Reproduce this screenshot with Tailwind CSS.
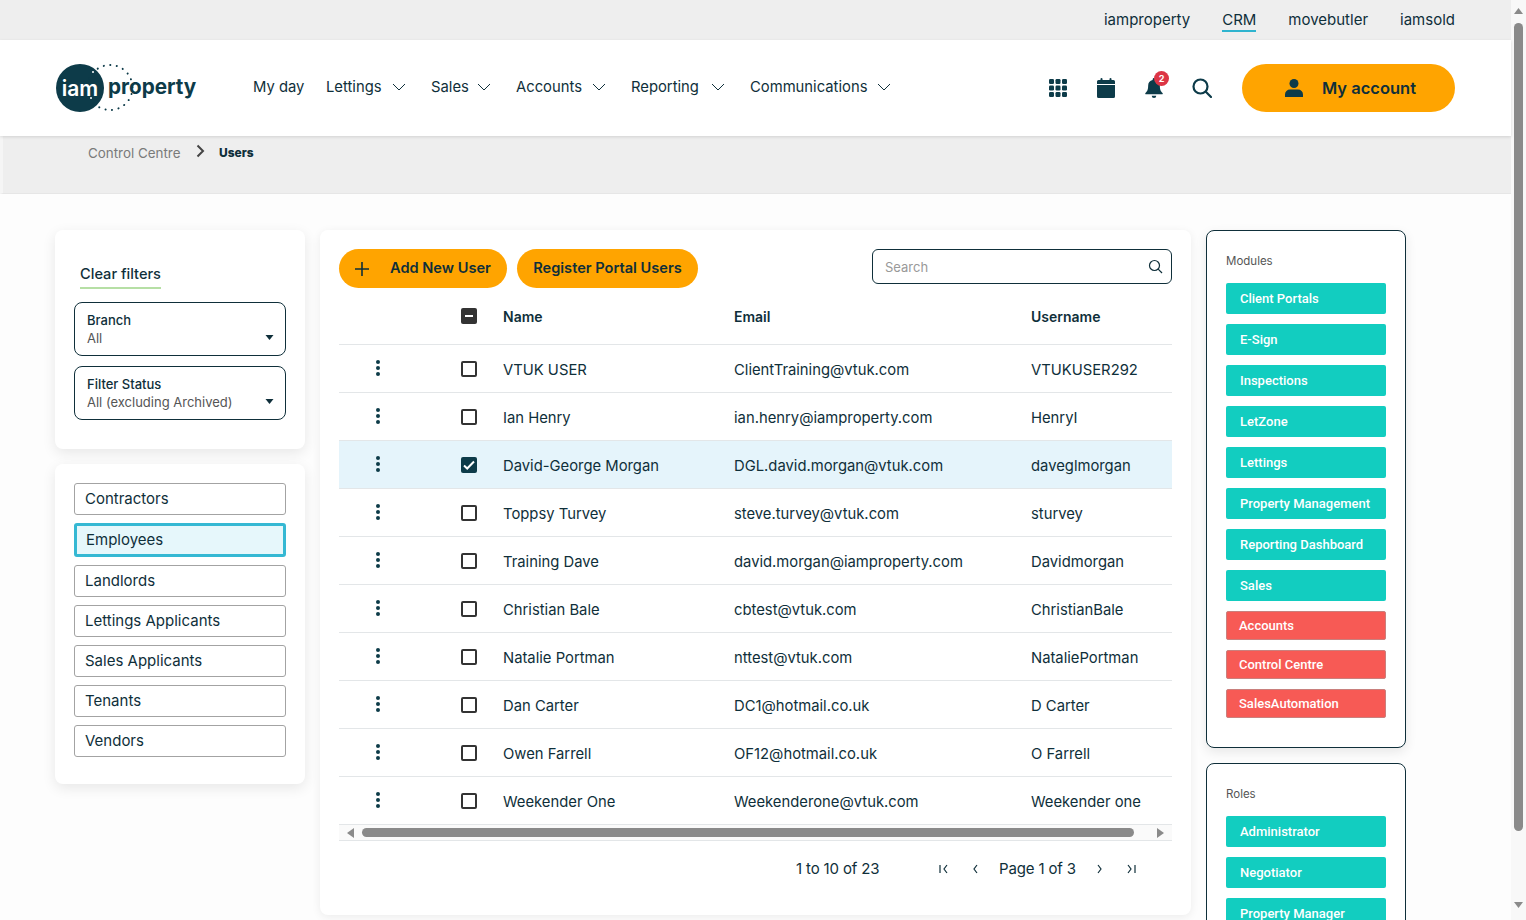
<!DOCTYPE html>
<html>
  <head>
    <meta charset="UTF-8" />
    <meta name="viewport" content="width=device-width, initial-scale=1.0" />
    <title>Users</title>
    <script src="https://cdn.jsdelivr.net/npm/@tailwindcss/browser@4"></script>
  </head>
  <body class="bg-[#fdfdfd] font-[Inter,sans-serif] text-[#0f2f3a]">
    <div class="flex h-[920px] overflow-hidden">
      <div class="w-[1511px] shrink-0">
        <!-- top strip -->
        <div class="h-10 bg-[#eeeeee] flex justify-end items-start gap-8 pr-14 text-[15px]">
          <a class="pt-[10px] leading-5">iamproperty</a>
          <a class="pt-[10px] leading-5 h-8 border-b-2 border-[#2fb4cf]">CRM</a>
          <a class="pt-[10px] leading-5">movebutler</a>
          <a class="pt-[10px] leading-5">iamsold</a>
        </div>
        <!-- header -->
        <header class="h-24 bg-white shadow-[0_1px_3px_rgba(0,0,0,0.12)] flex items-center pl-14 pr-14 relative">
          <div class="w-[197px] shrink-0 flex items-center relative h-12">
            <svg width="84" height="52" viewBox="0 0 84 52" class="absolute left-0 top-[-2px]">
              <circle cx="24" cy="26" r="24" fill="#0d3b49" />
              <circle cx="54" cy="25.500" r="22.500" fill="none" stroke="#0d3b49" stroke-width="2" stroke-linecap="round" stroke-dasharray="0.1 6.500" />
              <circle cx="37" cy="10" r="1" fill="#fff" />
              <circle cx="35" cy="36" r="1" fill="#fff" />
            </svg>
            <span class="relative w-12 text-center text-white text-[21px] font-semibold leading-none">iam</span>
            <span class="relative ml-1 mb-[2px] text-[20.700px] font-bold leading-none text-[#0d3b49]">property</span>
          </div>
          <nav class="flex items-center text-[14.800px] mb-[2px]">
            <a class="mr-[23px] w-[50px] whitespace-nowrap">My day</a>
            <a class="mr-[25px] flex items-center gap-[9px]"><span class="w-[57px]">Lettings</span>
              <svg width="14" height="8" viewBox="0 0 14 8" fill="none" stroke="#0f2f3a" stroke-width="1"><path d="M1 1l6 6 6-6" /></svg>
            </a>
            <a class="mr-[25px] flex items-center gap-[9px]"><span class="w-[37px]">Sales</span>
              <svg width="14" height="8" viewBox="0 0 14 8" fill="none" stroke="#0f2f3a" stroke-width="1"><path d="M1 1l6 6 6-6" /></svg>
            </a>
            <a class="mr-[25px] flex items-center gap-[9px]"><span class="w-[67px]">Accounts</span>
              <svg width="14" height="8" viewBox="0 0 14 8" fill="none" stroke="#0f2f3a" stroke-width="1"><path d="M1 1l6 6 6-6" /></svg>
            </a>
            <a class="mr-[25px] flex items-center gap-[9px]"><span class="w-[71px]">Reporting</span>
              <svg width="14" height="8" viewBox="0 0 14 8" fill="none" stroke="#0f2f3a" stroke-width="1"><path d="M1 1l6 6 6-6" /></svg>
            </a>
            <a class="flex items-center gap-[9px]"><span class="w-[118px]">Communications</span>
              <svg width="14" height="8" viewBox="0 0 14 8" fill="none" stroke="#0f2f3a" stroke-width="1"><path d="M1 1l6 6 6-6" /></svg>
            </a>
          </nav>
          <div class="ml-auto flex items-center">
            <div class="flex items-center gap-[30px] mr-[30px]">
              <svg width="18" height="18" viewBox="0 0 18 18" fill="#0d3b49">
                <rect x="0" y="0" width="5" height="5" rx="1.2" /><rect x="6.500" y="0" width="5" height="5" rx="1.2" /><rect x="13" y="0" width="5" height="5" rx="1.2" />
                <rect x="0" y="6.500" width="5" height="5" rx="1.2" /><rect x="6.500" y="6.500" width="5" height="5" rx="1.2" /><rect x="13" y="6.500" width="5" height="5" rx="1.2" />
                <rect x="0" y="13" width="5" height="5" rx="1.2" /><rect x="6.500" y="13" width="5" height="5" rx="1.2" /><rect x="13" y="13" width="5" height="5" rx="1.2" />
              </svg>
              <svg width="18" height="20" viewBox="0 0 18 20" fill="#0d3b49">
                <rect x="3.500" y="0" width="2" height="4" rx="1" /><rect x="12.500" y="0" width="2" height="4" rx="1" />
                <path d="M1.500 2h15A1.500 1.500 0 0 1 18 3.500V6H0V3.500A1.500 1.500 0 0 1 1.500 2zM0 7h18v11.500a1.500 1.500 0 0 1-1.500 1.500h-15A1.500 1.500 0 0 1 0 18.500z" />
              </svg>
              <div class="relative w-[18px] h-5">
                <svg width="18" height="20" viewBox="0 0 20 22" fill="#0d3b49">
                  <path d="M10 0a1.500 1.500 0 0 1 1.500 1.500v.7A6.500 6.500 0 0 1 16.500 8.500c0 5 1.300 6.300 3 8 .5.600.2 1.500-.7 1.500H1.200c-.9 0-1.200-.9-.7-1.500 1.700-1.700 3-3 3-8A6.500 6.500 0 0 1 8.500 2.200v-.7A1.500 1.500 0 0 1 10 0z" />
                  <path d="M7.500 19.500h5a2.500 2.500 0 0 1-5 0z" />
                </svg>
                <span class="absolute left-[9px] top-[-7px] w-[15px] h-[15px] rounded-full bg-[#dc3545] text-white text-[9px] font-bold leading-[15px] text-center">2</span>
              </div>
              <svg width="20" height="20" viewBox="0 0 20 20" fill="none" stroke="#0d3b49" stroke-width="2.200" stroke-linecap="round" class="ml-[-1px]">
                <circle cx="8.500" cy="8.500" r="7" /><path d="M13.800 13.800L19 19" />
              </svg>
            </div>
            <button class="w-[213px] h-12 rounded-full bg-[#ffa400] flex items-center pl-[43px] text-[16.500px] font-semibold text-[#0f2f3a]">
              <svg width="18" height="18" viewBox="0 0 18 18" fill="#0d3b49" class="mr-[19px]">
                <circle cx="9" cy="4.500" r="4.500" /><path d="M0 18v-2.500A5 5 0 0 1 5 10.500h8a5 5 0 0 1 5 5V18z" />
              </svg>
              My account
            </button>
          </div>
        </header>
        <!-- breadcrumb -->
        <div class="h-[58px] bg-[#eeeeee] pl-[85px] pt-[8px] flex items-start gap-[15px] text-[13.400px] border-b border-[#e6e6e6] border-l-[3px] border-l-[#f5f5f5]">
          <span class="text-[#7a7a7a] leading-[18px] w-[93px] whitespace-nowrap">Control Centre</span>
          <svg width="9" height="14" viewBox="0 0 9 14" fill="none" stroke="#444" stroke-width="2"><path d="M1.500 1.500l5.500 5.500-5.500 5.500" /></svg>
          <span class="font-extrabold text-[12px] leading-[18px] ml-[-1px]">Users</span>
        </div>

        <div class="flex items-start gap-[15px] pl-[55px] pt-9">
          <!-- filters -->
          <div class="w-[250px] shrink-0 flex flex-col gap-[15px]">
            <section class="h-[219px] bg-white rounded-lg shadow-[0_4px_14px_rgba(0,0,0,0.09)] px-[19px] pt-[31px]">
              <div class="ml-[6px] inline-block text-[14.600px] font-medium leading-5 pb-[3px] border-b-2 border-[#b6dfa5]">Clear filters</div>
              <div class="mt-[13px] h-[54px] rounded-lg border border-[#0f2f3a] pl-3 pr-[11px] pt-[8px] flex justify-between">
                <div class="text-[13px] leading-[18px]">
                  <div class="font-medium">Branch</div>
                  <div class="text-[#555]">All</div>
                </div>
                <svg width="9" height="6" viewBox="0 0 9 6" fill="#0f2f3a" class="mt-[24px]"><path d="M.5 0h8l-4 5z" /></svg>
              </div>
              <div class="mt-[10px] h-[54px] rounded-lg border border-[#0f2f3a] pl-3 pr-[11px] pt-[8px] flex justify-between">
                <div class="text-[13px] leading-[18px]">
                  <div class="font-medium">Filter Status</div>
                  <div class="text-[#555]">All (excluding Archived)</div>
                </div>
                <svg width="9" height="6" viewBox="0 0 9 6" fill="#0f2f3a" class="mt-[24px]"><path d="M.5 0h8l-4 5z" /></svg>
              </div>
            </section>
            <section class="h-[320px] bg-white rounded-lg shadow-[0_4px_14px_rgba(0,0,0,0.09)] px-[19px] pt-[19px] flex flex-col gap-2 text-[15px]">
              <div class="h-8 rounded-[3px] border border-[#a3a3a3] px-[10px] leading-[30px]">Contractors</div>
              <div class="h-[34px] rounded-[3px] border-[3px] border-[#35b8d3] bg-[#e6f7fb] px-[9px] leading-[27px]">Employees</div>
              <div class="h-8 rounded-[3px] border border-[#a3a3a3] px-[10px] leading-[30px]">Landlords</div>
              <div class="h-8 rounded-[3px] border border-[#a3a3a3] px-[10px] leading-[30px]">Lettings Applicants</div>
              <div class="h-8 rounded-[3px] border border-[#a3a3a3] px-[10px] leading-[30px]">Sales Applicants</div>
              <div class="h-8 rounded-[3px] border border-[#a3a3a3] px-[10px] leading-[30px]">Tenants</div>
              <div class="h-8 rounded-[3px] border border-[#a3a3a3] px-[10px] leading-[30px]">Vendors</div>
            </section>
          </div>

          <!-- users table -->
          <section class="w-[871px] h-[685px] shrink-0 bg-white rounded-lg shadow-[0_2px_10px_rgba(0,0,0,0.07)] px-[19px] pt-[19px]">
            <div class="flex items-start h-[44px]">
              <button class="w-[168px] h-[39px] rounded-full bg-[#ffa400] flex items-center pl-4 text-[14.600px] font-semibold">
                <svg width="14" height="14" viewBox="0 0 14 14" stroke="#0f2f3a" stroke-width="1.600" class="mr-[21px]"><path d="M7 0v14M0 7h14" /></svg>
                Add New User
              </button>
              <button class="ml-[10px] w-[181px] h-[39px] rounded-full bg-[#ffa400] text-[14.600px] font-semibold">Register Portal Users</button>
              <div class="ml-auto w-[300px] h-[35px] rounded-md border border-[#0f2f3a] flex items-center justify-between pl-3 pr-[8px] text-[13px] text-[#999]">
                <span class="pt-[2px]">Search</span>
                <svg width="15" height="15" viewBox="0 0 15 15" fill="none" stroke="#0f2f3a" stroke-width="1.200"><circle cx="6.500" cy="6.500" r="5" /><path d="M10.200 10.200L14 14" /></svg>
              </div>
            </div>

            <div class="text-[14.800px]">
              <div class="flex items-center h-[52px] pb-[5px] border-b border-[#e3e6e8] font-semibold text-[14px]">
                <div class="w-[122px]"></div>
                <div class="w-[42px]">
                  <svg width="16" height="16" viewBox="0 0 16 16"><rect width="16" height="16" rx="2" fill="#333" /><path d="M4 8h8" stroke="#fff" stroke-width="2" /></svg>
                </div>
                <div class="w-[231px]">Name</div>
                <div class="w-[297px]">Email</div>
                <div>Username</div>
              </div>

              <div class="flex items-center h-12 border-b border-[#e3e6e8]">
                <div class="w-[122px] pl-[37px] pb-[2px]"><svg width="4" height="16" viewBox="0 0 4 16" fill="#0d3b49"><circle cx="2" cy="2" r="2" /><circle cx="2" cy="8" r="2" /><circle cx="2" cy="14" r="2" /></svg></div>
                <div class="w-[42px]"><div class="w-4 h-4 rounded-[2px] border-2 border-[#333]"></div></div>
                <div class="w-[231px] pt-1">VTUK USER</div>
                <div class="w-[297px] pt-1">ClientTraining@vtuk.com</div>
                <div class="pt-1">VTUKUSER292</div>
              </div>
              <div class="flex items-center h-12 border-b border-[#e3e6e8]">
                <div class="w-[122px] pl-[37px] pb-[2px]"><svg width="4" height="16" viewBox="0 0 4 16" fill="#0d3b49"><circle cx="2" cy="2" r="2" /><circle cx="2" cy="8" r="2" /><circle cx="2" cy="14" r="2" /></svg></div>
                <div class="w-[42px]"><div class="w-4 h-4 rounded-[2px] border-2 border-[#333]"></div></div>
                <div class="w-[231px] pt-1">Ian Henry</div>
                <div class="w-[297px] pt-1">ian.henry@iamproperty.com</div>
                <div class="pt-1">HenryI</div>
              </div>
              <div class="flex items-center h-12 border-b border-[#e3e6e8] bg-[#e5f4fb]">
                <div class="w-[122px] pl-[37px] pb-[2px]"><svg width="4" height="16" viewBox="0 0 4 16" fill="#0d3b49"><circle cx="2" cy="2" r="2" /><circle cx="2" cy="8" r="2" /><circle cx="2" cy="14" r="2" /></svg></div>
                <div class="w-[42px]">
                  <svg width="16" height="16" viewBox="0 0 16 16"><rect width="16" height="16" rx="2" fill="#0d3b49" /><path d="M3 8.500l3.200 3L13 4.500" fill="none" stroke="#fff" stroke-width="2" /></svg>
                </div>
                <div class="w-[231px] pt-1">David-George Morgan</div>
                <div class="w-[297px] pt-1">DGL.david.morgan@vtuk.com</div>
                <div class="pt-1">daveglmorgan</div>
              </div>
              <div class="flex items-center h-12 border-b border-[#e3e6e8]">
                <div class="w-[122px] pl-[37px] pb-[2px]"><svg width="4" height="16" viewBox="0 0 4 16" fill="#0d3b49"><circle cx="2" cy="2" r="2" /><circle cx="2" cy="8" r="2" /><circle cx="2" cy="14" r="2" /></svg></div>
                <div class="w-[42px]"><div class="w-4 h-4 rounded-[2px] border-2 border-[#333]"></div></div>
                <div class="w-[231px] pt-1">Toppsy Turvey</div>
                <div class="w-[297px] pt-1">steve.turvey@vtuk.com</div>
                <div class="pt-1">sturvey</div>
              </div>
              <div class="flex items-center h-12 border-b border-[#e3e6e8]">
                <div class="w-[122px] pl-[37px] pb-[2px]"><svg width="4" height="16" viewBox="0 0 4 16" fill="#0d3b49"><circle cx="2" cy="2" r="2" /><circle cx="2" cy="8" r="2" /><circle cx="2" cy="14" r="2" /></svg></div>
                <div class="w-[42px]"><div class="w-4 h-4 rounded-[2px] border-2 border-[#333]"></div></div>
                <div class="w-[231px] pt-1">Training Dave</div>
                <div class="w-[297px] pt-1">david.morgan@iamproperty.com</div>
                <div class="pt-1">Davidmorgan</div>
              </div>
              <div class="flex items-center h-12 border-b border-[#e3e6e8]">
                <div class="w-[122px] pl-[37px] pb-[2px]"><svg width="4" height="16" viewBox="0 0 4 16" fill="#0d3b49"><circle cx="2" cy="2" r="2" /><circle cx="2" cy="8" r="2" /><circle cx="2" cy="14" r="2" /></svg></div>
                <div class="w-[42px]"><div class="w-4 h-4 rounded-[2px] border-2 border-[#333]"></div></div>
                <div class="w-[231px] pt-1">Christian Bale</div>
                <div class="w-[297px] pt-1">cbtest@vtuk.com</div>
                <div class="pt-1">ChristianBale</div>
              </div>
              <div class="flex items-center h-12 border-b border-[#e3e6e8]">
                <div class="w-[122px] pl-[37px] pb-[2px]"><svg width="4" height="16" viewBox="0 0 4 16" fill="#0d3b49"><circle cx="2" cy="2" r="2" /><circle cx="2" cy="8" r="2" /><circle cx="2" cy="14" r="2" /></svg></div>
                <div class="w-[42px]"><div class="w-4 h-4 rounded-[2px] border-2 border-[#333]"></div></div>
                <div class="w-[231px] pt-1">Natalie Portman</div>
                <div class="w-[297px] pt-1">nttest@vtuk.com</div>
                <div class="pt-1">NataliePortman</div>
              </div>
              <div class="flex items-center h-12 border-b border-[#e3e6e8]">
                <div class="w-[122px] pl-[37px] pb-[2px]"><svg width="4" height="16" viewBox="0 0 4 16" fill="#0d3b49"><circle cx="2" cy="2" r="2" /><circle cx="2" cy="8" r="2" /><circle cx="2" cy="14" r="2" /></svg></div>
                <div class="w-[42px]"><div class="w-4 h-4 rounded-[2px] border-2 border-[#333]"></div></div>
                <div class="w-[231px] pt-1">Dan Carter</div>
                <div class="w-[297px] pt-1">DC1@hotmail.co.uk</div>
                <div class="pt-1">D Carter</div>
              </div>
              <div class="flex items-center h-12 border-b border-[#e3e6e8]">
                <div class="w-[122px] pl-[37px] pb-[2px]"><svg width="4" height="16" viewBox="0 0 4 16" fill="#0d3b49"><circle cx="2" cy="2" r="2" /><circle cx="2" cy="8" r="2" /><circle cx="2" cy="14" r="2" /></svg></div>
                <div class="w-[42px]"><div class="w-4 h-4 rounded-[2px] border-2 border-[#333]"></div></div>
                <div class="w-[231px] pt-1">Owen Farrell</div>
                <div class="w-[297px] pt-1">OF12@hotmail.co.uk</div>
                <div class="pt-1">O Farrell</div>
              </div>
              <div class="flex items-center h-12 border-b border-[#e3e6e8]">
                <div class="w-[122px] pl-[37px] pb-[2px]"><svg width="4" height="16" viewBox="0 0 4 16" fill="#0d3b49"><circle cx="2" cy="2" r="2" /><circle cx="2" cy="8" r="2" /><circle cx="2" cy="14" r="2" /></svg></div>
                <div class="w-[42px]"><div class="w-4 h-4 rounded-[2px] border-2 border-[#333]"></div></div>
                <div class="w-[231px] pt-1">Weekender One</div>
                <div class="w-[297px] pt-1">Weekenderone@vtuk.com</div>
                <div class="pt-1">Weekender one</div>
              </div>
            </div>

            <!-- horizontal scrollbar -->
            <div class="h-4 border-b border-[#e3e6e8] bg-[#fafafa] flex items-center px-[7px]">
              <svg width="8" height="10" viewBox="0 0 8 10" fill="#8a8a8a"><path d="M8 0v10L1 5z" /></svg>
              <div class="ml-2 w-[772px] h-[9px] rounded-full bg-[#8a8a8a]"></div>
              <svg width="8" height="10" viewBox="0 0 8 10" fill="#8a8a8a" class="ml-auto"><path d="M0 0v10l7-5z" /></svg>
            </div>

            <!-- pagination -->
            <div class="flex items-center h-[56px] text-[15px] pl-[457px]">
              <span class="w-[143px] tracking-[-0.15px]">1 to 10 of 23</span>
              <svg width="10" height="10" viewBox="0 0 10 10" fill="none" stroke="#0f2f3a" stroke-width="1.200"><path d="M1 1v8M8 1L5 5l3 4" /></svg>
              <svg width="6" height="10" viewBox="0 0 6 10" fill="none" stroke="#0f2f3a" stroke-width="1.200" class="ml-[23px]"><path d="M5 1L2 5l3 4" /></svg>
              <span class="ml-[21px] w-[78px] whitespace-nowrap tracking-[-0.15px]">Page 1 of 3</span>
              <svg width="6" height="10" viewBox="0 0 6 10" fill="none" stroke="#0f2f3a" stroke-width="1.200" class="ml-[20px]"><path d="M1 1l3 4-3 4" /></svg>
              <svg width="10" height="10" viewBox="0 0 10 10" fill="none" stroke="#0f2f3a" stroke-width="1.200" class="ml-[23px]"><path d="M2 1l3 4-3 4M9 1v8" /></svg>
            </div>
          </section>

          <!-- modules and roles -->
          <div class="w-[200px] shrink-0 flex flex-col gap-[15px] font-[Roboto,sans-serif] text-[13px] font-medium text-white">
            <section class="h-[518px] bg-white rounded-lg border border-[#0f2f3a] shadow-[0_4px_12px_rgba(0,0,0,0.09)] px-[19px] pt-[23px]">
              <div class="text-[11.500px] font-normal font-[Inter,sans-serif] text-[#555] leading-[14px] mb-[15px]">Modules</div>
              <div class="flex flex-col gap-[10px]">
                <div class="h-[31px] rounded-[2px] bg-[#12cdc0] pl-[14px] leading-[31px]">Client Portals</div>
                <div class="h-[31px] rounded-[2px] bg-[#12cdc0] pl-[14px] leading-[31px]">E-Sign</div>
                <div class="h-[31px] rounded-[2px] bg-[#12cdc0] pl-[14px] leading-[31px]">Inspections</div>
                <div class="h-[31px] rounded-[2px] bg-[#12cdc0] pl-[14px] leading-[31px]">LetZone</div>
                <div class="h-[31px] rounded-[2px] bg-[#12cdc0] pl-[14px] leading-[31px]">Lettings</div>
                <div class="h-[31px] rounded-[2px] bg-[#12cdc0] pl-[14px] leading-[31px]">Property Management</div>
                <div class="h-[31px] rounded-[2px] bg-[#12cdc0] pl-[14px] leading-[31px]">Reporting Dashboard</div>
                <div class="h-[31px] rounded-[2px] bg-[#12cdc0] pl-[14px] leading-[31px]">Sales</div>
                <div class="h-[29px] rounded-[2px] bg-[#f75a55] border border-[#c9807d] pl-[12px] leading-[27px]">Accounts</div>
                <div class="h-[29px] rounded-[2px] bg-[#f75a55] border border-[#c9807d] pl-[12px] leading-[27px]">Control Centre</div>
                <div class="h-[29px] rounded-[2px] bg-[#f75a55] border border-[#c9807d] pl-[12px] leading-[27px]">SalesAutomation</div>
              </div>
            </section>
            <section class="h-[300px] bg-white rounded-lg border border-[#0f2f3a] px-[19px] pt-[23px]">
              <div class="text-[11.500px] font-normal font-[Inter,sans-serif] text-[#555] leading-[14px] mb-[15px]">Roles</div>
              <div class="flex flex-col gap-[10px]">
                <div class="h-[31px] rounded-[2px] bg-[#12cdc0] pl-[14px] leading-[31px]">Administrator</div>
                <div class="h-[31px] rounded-[2px] bg-[#12cdc0] pl-[14px] leading-[31px]">Negotiator</div>
                <div class="h-[31px] rounded-[2px] bg-[#12cdc0] pl-[14px] leading-[31px]">Property Manager</div>
              </div>
            </section>
          </div>
        </div>
      </div>

      <!-- page scrollbar -->
      <div class="w-[15px] shrink-0 bg-[#f8f8f8] flex flex-col items-center pt-[8px]">
        <svg width="9" height="6" viewBox="0 0 9 6" fill="#8a8a8a"><path d="M4.500 0L9 6H0z" /></svg>
        <div class="mt-[9px] w-[9px] h-[808px] rounded-full bg-[#8a8a8a]"></div>
        <svg width="9" height="6" viewBox="0 0 9 6" fill="#8a8a8a" class="mt-[71px]"><path d="M0 0h9L4.500 6z" /></svg>
      </div>
    </div>
  </body>
</html>
